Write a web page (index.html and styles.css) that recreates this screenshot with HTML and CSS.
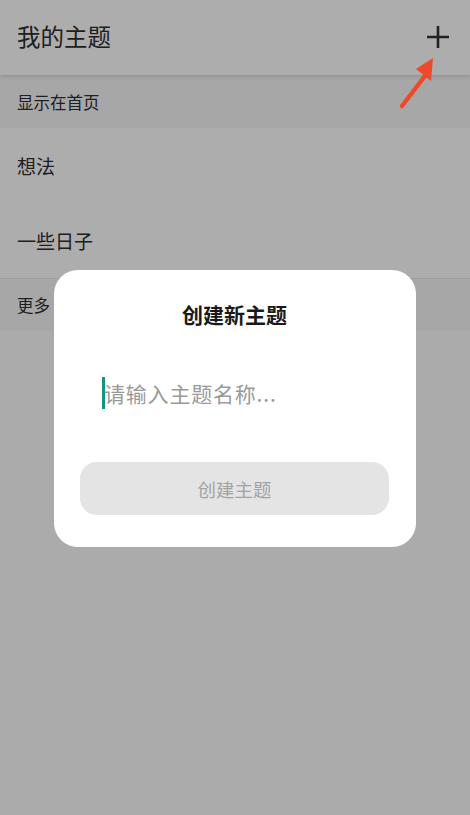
FILE: index.html
```html
<!DOCTYPE html>
<html lang="zh-CN">
<head>
    <meta charset="UTF-8">
    <meta name="viewport" content="width=device-width, initial-scale=1.0">
    <title>我的主题</title>
    <link rel="stylesheet" href="styles.css">
</head>
<body>
    <!-- 顶部栏 -->
    <div class="header">
        <h1>我的主题</h1>
        <svg class="add-btn" width="24" height="24" viewBox="0 0 24 24">
            <path d="M12 1v22M1 12h22" stroke="#333" stroke-width="2.6" fill="none"/>
        </svg>
    </div>

    <div class="section">显示在首页</div>
    <div class="item">想法</div>
    <div class="item">一些日子</div>
    <div class="section">更多</div>
    <div class="rest"></div>

    <!-- 遮罩与弹窗 -->
    <div class="mask"></div>
    <div class="dialog">
        <h2>创建新主题</h2>
        <div class="field"><span class="caret"></span><span class="placeholder">请输入主题名称...</span></div>
        <button class="create-btn">创建主题</button>
    </div>

    <svg class="arrow" width="50" height="60" viewBox="0 0 50 60">
        <path d="M4 54 L30 20" stroke="#f0482a" stroke-width="4.5" stroke-linecap="round" fill="none"/>
        <path d="M35 6 L18 17 L33 29 Z" fill="#f0482a"/>
    </svg>
</body>
</html>
```

FILE: styles.css
```css
* { margin: 0; padding: 0; box-sizing: border-box; }
body { width: 470px; height: 815px; font-family: "Noto Sans CJK SC", "Noto Sans", sans-serif; color: #333; background: #fdfdfd; overflow: hidden; }

.header { height: 75px; display: flex; align-items: center; justify-content: space-between; padding: 0 20px 0 17px; background: #fff; box-shadow: 0 2px 4px rgba(0,0,0,0.12); position: relative; }
.header h1 { font-size: 23.5px; font-weight: 400; color: #2e2e2e; margin-top: -3px; }
.add-btn { margin-top: -1px; }

.section { height: 53px; display: flex; align-items: center; padding: 0 17px; background: #f7f7f7; font-size: 16.5px; color: #2e2e2e; }
.item { height: 75px; display: flex; align-items: center; padding: 0 17px; background: #fff; font-size: 19px; color: #2e2e2e; }
.item + .section { border-top: 1px solid #ebebeb; }

.mask { position: fixed; inset: 0; background: rgba(0,0,0,0.32); }

.dialog { position: fixed; left: 54px; top: 270px; width: 362px; height: 277px; background: #fff; border-radius: 24px; display: flex; flex-direction: column; align-items: center; padding: 28px 27px 0 26px; }
.dialog h2 { font-size: 21px; font-weight: 700; color: #1a1a1a; line-height: 32px; }
.field { align-self: stretch; display: flex; align-items: center; height: 32px; margin-top: 47px; padding-left: 22px; }
.caret { width: 3px; height: 32px; background: #13977c; }
.placeholder { font-size: 21px; color: #9a9a9a; margin-left: -1px; letter-spacing: 0.8px; }
.create-btn { align-self: stretch; height: 53px; margin-top: 53px; border: none; border-radius: 17px; background: #e4e4e4; color: #a3a3a3; font-family: inherit; font-size: 18.5px; }

.arrow { position: fixed; left: 398px; top: 52px; }
```
